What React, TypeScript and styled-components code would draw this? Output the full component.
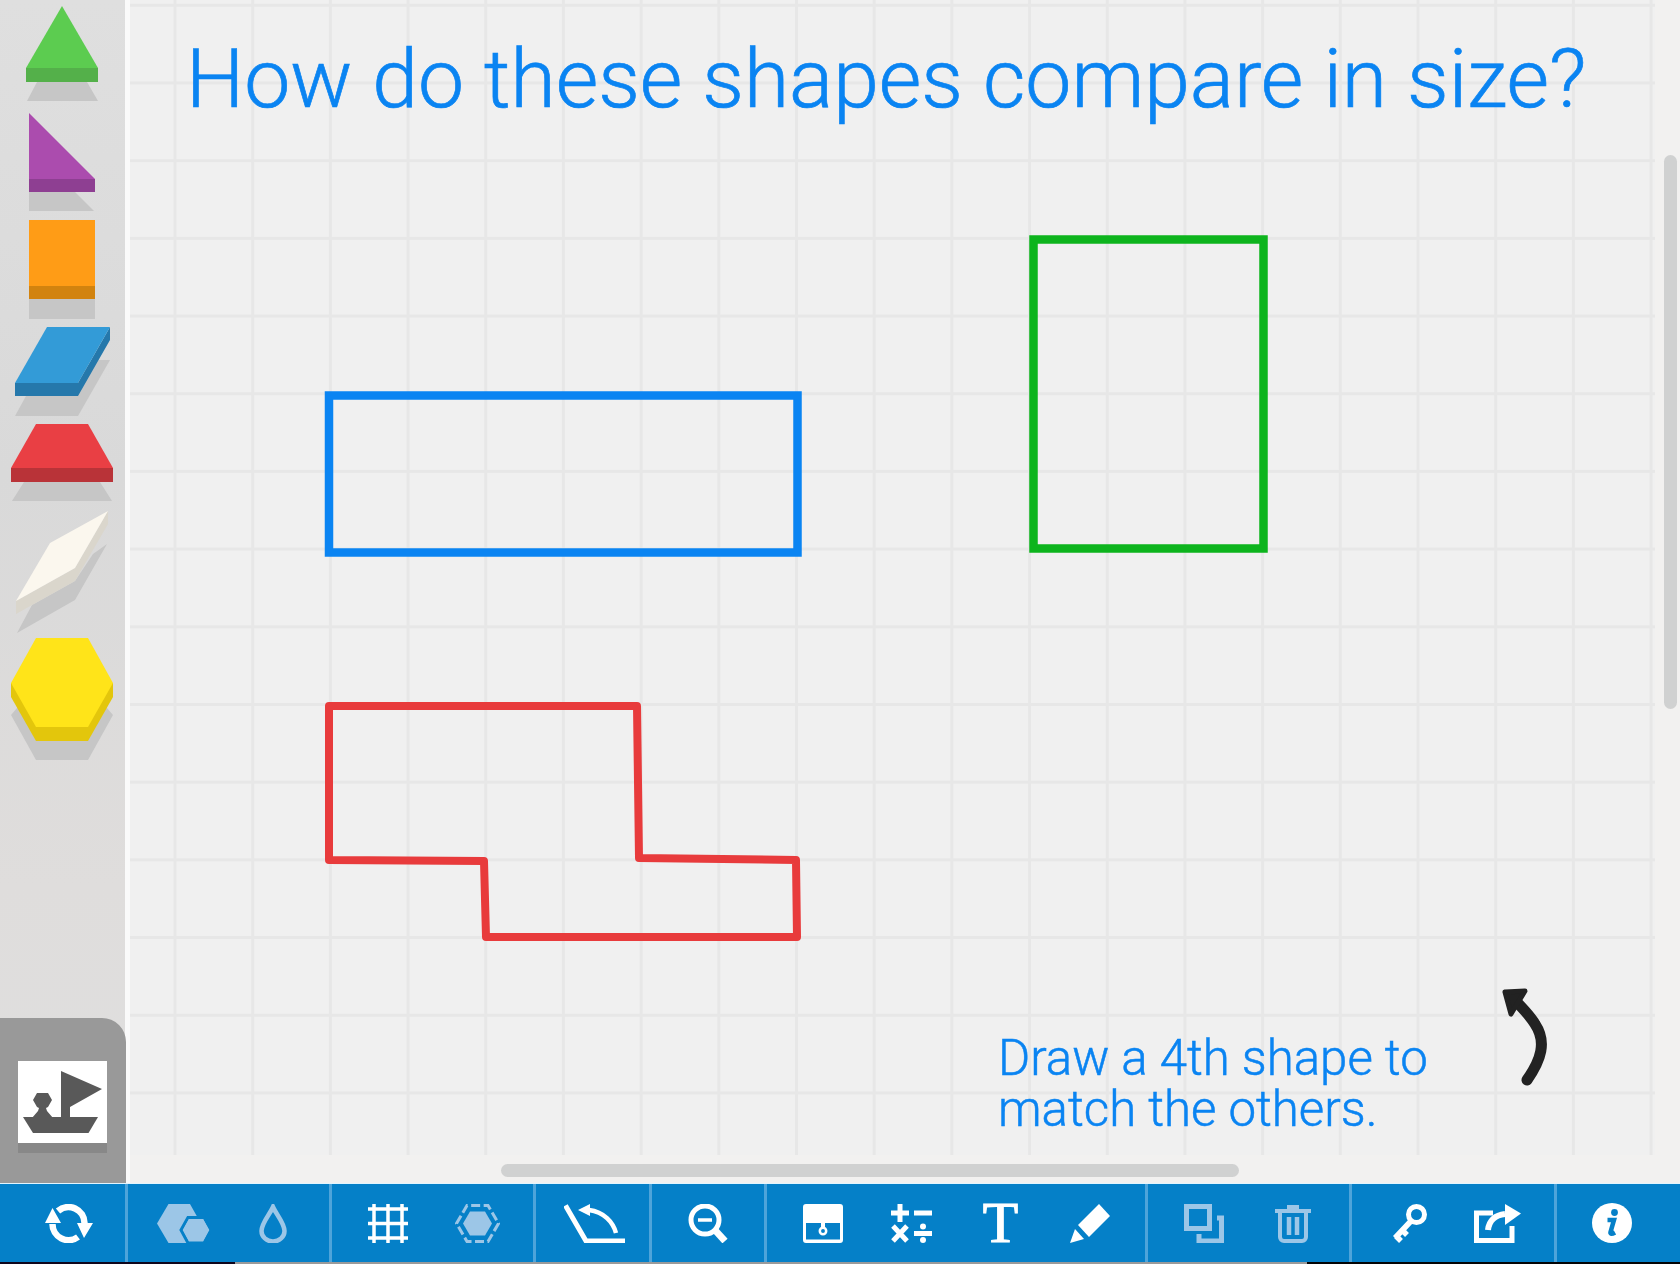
import React from "react";
import styled, { createGlobalStyle } from "styled-components";

const Global = createGlobalStyle`
  html, body { margin: 0; padding: 0; background: #f1f0f0; }
  #root { width: 1680px; height: 1264px; overflow: hidden; }
`;

const Page = styled.div`
  width: 1680px;
  height: 1264px;
  display: flex;
  flex-direction: column;
  font-family: Roboto, "Liberation Sans", sans-serif;
`;

const Workspace = styled.div`
  display: flex;
  height: 1183px;
`;

const Sidebar = styled.aside`
  width: 125px;
  flex: none;
  display: flex;
  flex-direction: column;
  justify-content: space-between;
  border-right: 5px solid #fafafa;
  background: linear-gradient(180deg, #dfdfdf 0%, #d9d9d9 40%, #dfdddc 75%, #dfdfdf 100%);
`;

const ShapeTray = styled.svg`
  display: block;
  width: 125px;
  height: 780px;
`;

const BoatPanel = styled.div`
  height: 122px;
  margin-right: -1px;
  padding-top: 43px;
  background: #999999;
  border-top-right-radius: 24px;
`;

const BoatTile = styled.div`
  width: 89px;
  height: 82px;
  margin-left: 18px;
  background: #ffffff;
  box-shadow: 0 10px 0 #888888;
`;

const Canvas = styled.main`
  position: relative;
  flex: 1;
  background: #f2f1f0;
`;

const GridPaper = styled.div`
  height: 1155px;
  width: 1525px;
  box-sizing: border-box;
  padding: 24px 0 0 56px;
  background-color: #f0f0f0;
  background-image:
    linear-gradient(90deg, #e7e7e7 0, #e7e7e7 3px, transparent 3px),
    linear-gradient(180deg, #e7e7e7 0, #e7e7e7 3px, transparent 3px);
  background-size: 77.7px 77.7px;
  background-position: 43.5px 3.8px;
`;

const Title = styled.h1`
  margin: 0;
  font-size: 82.2px;
  line-height: 110px;
  font-weight: 300;
  color: #0a84f2;
  -webkit-text-stroke: 0.7px #0a84f2;
  white-space: nowrap;
`;

const Drawing = styled.svg`
  position: absolute;
  left: 0;
  top: 0;
  width: 1550px;
  height: 1183px;
  pointer-events: none;
`;

const Note = styled.p`
  position: absolute;
  left: 868px;
  top: 1033px;
  margin: 0;
  font-size: 49.2px;
  line-height: 51px;
  font-weight: 300;
  color: #0a84f2;
  -webkit-text-stroke: 0.5px #0a84f2;
  white-space: nowrap;
`;

const VerticalThumb = styled.div`
  position: absolute;
  left: 1534px;
  top: 155px;
  width: 13px;
  height: 554px;
  border-radius: 7px;
  background: #d0d1d1;
`;

const HorizontalThumb = styled.div`
  position: absolute;
  left: 371px;
  top: 1164px;
  width: 738px;
  height: 13px;
  border-radius: 7px;
  background: #d0d1d1;
`;

const Toolbar = styled.nav`
  display: flex;
  height: 78px;
  border-top: 1px solid #e2f5ff;
  background: #0580c8;
`;

const Group = styled.div<{ $w: number; $last?: boolean; $nudge?: number }>`
  width: ${(p) => p.$w}px;
  flex: none;
  box-sizing: border-box;
  display: flex;
  justify-content: center;
  align-items: center;
  padding-left: ${(p) => Math.max(p.$nudge ?? 0, 0)}px;
  padding-right: ${(p) => Math.max(-(p.$nudge ?? 0), 0)}px;
  border-right: ${(p) => (p.$last ? "none" : "3px solid #4ea4da")};
`;

const ToolButton = styled.button`
  width: 89px;
  height: 78px;
  flex: none;
  padding: 0;
  border: 0;
  background: none;
  display: flex;
  align-items: center;
  justify-content: center;
  color: #ffffff;
`;

const Dim = styled.span`
  display: flex;
  color: #9cc6e7;
`;

const SerifT = styled.span`
  font-family: "Liberation Serif", serif;
  font-size: 58px;
  font-weight: 400;
  line-height: 60px;
  color: #ffffff;
  -webkit-text-stroke: 1.2px #ffffff;
`;

const Base = styled.div`
  height: 2px;
  display: flex;
`;

const BaseSegment = styled.div<{ $w: number; $c: string }>`
  width: ${(p) => p.$w}px;
  background: ${(p) => p.$c};
`;

type P = { w: number; h: number; children: React.ReactNode };
const Ico = ({ w, h, children }: P) => (
  <svg width={w} height={h} viewBox={`0 0 ${w} ${h}`} fill="none" stroke="currentColor" strokeWidth={0}>
    {children}
  </svg>
);

const Refresh = () => (
  <Ico w={48} h={39}>
    <path d="M13 7A16 16 0 0 1 39.5 19M33 33A16 16 0 0 1 7.5 20" strokeWidth={6.5} />
    <path d="M0 19H16L7.5 4ZM32 19H48L39 34Z" fill="currentColor" />
  </Ico>
);

const HexPair = () => (
  <Ico w={54} h={39}>
    <path d="M0 19.5 11.5 0H33L44 19.5 33 39H11.5Z" fill="currentColor" />
    <path d="M24 26 31 13.5H47L54 26 47 39H31Z" fill="currentColor" stroke="#0580c8" strokeWidth={3} />
    <path d="M26 26 32 15H46L52 26 46 37H32Z" fill="currentColor" />
  </Ico>
);

const Drop = () => (
  <Ico w={28} h={39}>
    <path d="M14 3C11 10 2.5 19 2.5 27A11.5 10.5 0 0 0 25.5 27C25.5 19 17 10 14 3Z" strokeWidth={4.5} />
  </Ico>
);

const GridIcon = () => (
  <Ico w={40} h={39}>
    <path d="M6 0V39M20 0V39M34 0V39M0 5H40M0 19.5H40M0 34H40" strokeWidth={3.5} />
  </Ico>
);

const DashedHex = () => (
  <Ico w={45} h={39}>
    <path d="M1.5 19.5 12 1.5H33L43.5 19.5 33 37.5H12Z" strokeWidth={3} strokeDasharray="9 3.5" />
    <path d="M8 19.5 15 7.5H30L37 19.5 30 31.5H15Z" fill="currentColor" />
  </Ico>
);

const Angle = () => (
  <Ico w={61} h={39}>
    <path d="M1.5 1.5 22 37H61" strokeWidth={5} />
    <path d="M52 29C49 18 40 8 25 6" strokeWidth={4.5} />
    <path d="M14 6 26 0V12Z" fill="currentColor" />
  </Ico>
);

const ZoomOut = () => (
  <Ico w={40} h={39}>
    <circle cx={17} cy={16} r={14} strokeWidth={5} />
    <path d="M10 16H24" strokeWidth={3.5} />
    <path d="M26 25 37 37" strokeWidth={7} />
  </Ico>
);

const Safe = () => (
  <Ico w={40} h={39}>
    <path d="M3 0H37A3 3 0 0 1 40 3V36A3 3 0 0 1 37 39H3A3 3 0 0 1 0 36V3A3 3 0 0 1 3 0ZM3 19V35.5H37V19H22V23H18V19Z" fill="currentColor" fillRule="evenodd" />
    <circle cx={20} cy={27} r={3.2} strokeWidth={2.5} />
  </Ico>
);

const MathOps = () => (
  <Ico w={41} h={39}>
    <path d="M0 9H18M9 0V18M23 9H41M2 22 16 37M16 22 2 37M23 29.5H41" strokeWidth={5} />
    <circle cx={32} cy={22.5} r={3} fill="currentColor" />
    <circle cx={32} cy={36} r={3} fill="currentColor" />
  </Ico>
);

const Pencil = () => (
  <Ico w={40} h={39}>
    <path d="M29 0 40 12 19 33 8 21Z" fill="currentColor" />
    <path d="M5 25 14 35 0 39Z" fill="currentColor" />
  </Ico>
);

const CopyIcon = () => (
  <Ico w={40} h={39}>
    <rect x={2.5} y={2.5} width={23} height={22} strokeWidth={5} />
    <path d="M33 14H37.5V37H15V30" strokeWidth={5} />
  </Ico>
);

const Trash = () => (
  <Ico w={36} h={39}>
    <path d="M0 5H12V1H24V5H36V9H0Z" fill="currentColor" />
    <path d="M5 9V33A4 4 0 0 0 9 37H27A4 4 0 0 0 31 33V9" strokeWidth={4} />
    <path d="M14 13V31M22 13V31" strokeWidth={4.5} />
  </Ico>
);

const Key = () => (
  <Ico w={36} h={39}>
    <circle cx={25.5} cy={10.5} r={8} strokeWidth={5} />
    <path d="M20 17 4 34M11 26 16 31M5 32 10 37" strokeWidth={5.5} />
  </Ico>
);

const Share = () => (
  <Ico w={47} h={39}>
    <path d="M19 9H2.5V36.5H38V22" strokeWidth={5} />
    <path d="M14 26C15 17 21 11 31 10" strokeWidth={6} />
    <path d="M31 0 47 9.5 31 21Z" fill="currentColor" />
  </Ico>
);

const Info = () => (
  <Ico w={40} h={40}>
    <circle cx={20} cy={20} r={20} fill="currentColor" />
    <circle cx={22.5} cy={9.5} r={3.4} fill="#0580c8" />
    <path d="M15.5 17H22L18.5 29C18 31 19.5 31.5 23 29.5" stroke="#0580c8" strokeWidth={4.5} />
  </Ico>
);

const Tray = () => (
  <ShapeTray viewBox="0 0 125 780">
    <g fill="#c6c6c6">
      <path d="M27 101H98L87 82H37Z" />
      <path d="M29 192V211H94L75 192Z" />
      <path d="M29 299H95V319H29Z" />
      <path d="M110 360 78 416H15L26 396 99 360Z" />
      <path d="M12 501H112L100 482H24Z" />
      <path d="M107 544 75 600 17 633 32 605 75 581 93 554Z" />
      <path d="M36 760H88L113 715 100 700H24L11 715Z" />
    </g>
    <path d="M26 68H98V82H26Z" fill="#54b04a" />
    <path d="M62 6 98 68H26Z" fill="#5ccc50" />
    <path d="M29 179H95V192H29Z" fill="#8e3f92" />
    <path d="M29 113 95 179H29Z" fill="#ab4cae" />
    <path d="M29 286H95V299H29Z" fill="#d2830f" />
    <path d="M29 220H95V286H29Z" fill="#ff9c16" />
    <path d="M15 383H78L110 327V340L78 396H15Z" fill="#2578ab" />
    <path d="M47 327H110L78 383H15Z" fill="#339bd7" />
    <path d="M11 468H113V482H11Z" fill="#b93338" />
    <path d="M36 424H88L113 468H11Z" fill="#e93f44" />
    <path d="M16 601 75 568 108 511V524L75 581 16 614Z" fill="#dad6cc" />
    <path d="M108 511 50 543 16 601 75 568Z" fill="#fbf7ee" />
    <path d="M11 683V697L36 741H88L113 697V683Z" fill="#e3c60c" />
    <path d="M36 638H88L113 683 88 727H36L11 683Z" fill="#ffe419" />
  </ShapeTray>
);

const Boat = () => (
  <BoatTile>
    <svg width={89} height={82} viewBox="0 0 89 82" fill="#595959">
      <path d="M43 10 84 28 52 46V56H43Z" />
      <path d="M5 56H80L70.5 72H15Z" />
      <path d="M15 39 19 32H30L34 39 30 46 28 47 29 50 35 57H14L20 50 21 47 19 46Z" />
    </svg>
  </BoatTile>
);

export default function App() {
  return (
    <Page>
      <Global />
      <Workspace>
        <Sidebar>
          <Tray />
          <BoatPanel>
            <Boat />
          </BoatPanel>
        </Sidebar>
        <Canvas>
          <GridPaper>
            <Title>How do these shapes compare in size?</Title>
          </GridPaper>
          <Drawing viewBox="130 0 1550 1183" fill="none">
            <rect x={329} y={395.5} width={468.5} height={157} stroke="#0a84f2" strokeWidth={8.5} />
            <rect x={1033.5} y={239.5} width={230} height={309} stroke="#0db41d" strokeWidth={8.5} />
            <path d="M329 706H637L639 858 796 860 797 937H486L484 861 329 860Z" stroke="#e83b3c" strokeWidth={8} strokeLinejoin="round" />
            <path d="M1527 1080C1541 1060 1547 1042 1535 1024 1529 1014 1522 1008 1515 1000" stroke="#222222" strokeWidth={11} strokeLinecap="round" />
            <path d="M1505 992 1525 991 1517 1004 1511 1014Z" fill="#222222" stroke="#222222" strokeWidth={5} strokeLinejoin="round" />
          </Drawing>
          <Note>
            Draw a 4th shape to
            <br />
            match the others.
          </Note>
          <VerticalThumb />
          <HorizontalThumb />
        </Canvas>
      </Workspace>
      <Toolbar>
        <Group $w={128} $nudge={13}>
          <ToolButton aria-label="reset"><Refresh /></ToolButton>
        </Group>
        <Group $w={204}>
          <ToolButton aria-label="shapes"><Dim><HexPair /></Dim></ToolButton>
          <ToolButton aria-label="colour"><Dim><Drop /></Dim></ToolButton>
        </Group>
        <Group $w={204}>
          <ToolButton aria-label="grid"><GridIcon /></ToolButton>
          <ToolButton aria-label="outline"><Dim><DashedHex /></Dim></ToolButton>
        </Group>
        <Group $w={116} $nudge={3}>
          <ToolButton aria-label="angle"><Angle /></ToolButton>
        </Group>
        <Group $w={115}>
          <ToolButton aria-label="zoom out"><ZoomOut /></ToolButton>
        </Group>
        <Group $w={381}>
          <ToolButton aria-label="box"><Safe /></ToolButton>
          <ToolButton aria-label="math"><MathOps /></ToolButton>
          <ToolButton aria-label="text"><SerifT>T</SerifT></ToolButton>
          <ToolButton aria-label="pencil"><Pencil /></ToolButton>
        </Group>
        <Group $w={204}>
          <ToolButton aria-label="copy"><Dim><CopyIcon /></Dim></ToolButton>
          <ToolButton aria-label="delete"><Dim><Trash /></Dim></ToolButton>
        </Group>
        <Group $w={205}>
          <ToolButton aria-label="key"><Key /></ToolButton>
          <ToolButton aria-label="share"><Share /></ToolButton>
        </Group>
        <Group $w={123} $last $nudge={-14}>
          <ToolButton aria-label="info"><Info /></ToolButton>
        </Group>
      </Toolbar>
      <Base>
        <BaseSegment $w={235} $c="#10061c" />
        <BaseSegment $w={1072} $c="#9a9a9a" />
        <BaseSegment $w={373} $c="#050505" />
      </Base>
    </Page>
  );
}
